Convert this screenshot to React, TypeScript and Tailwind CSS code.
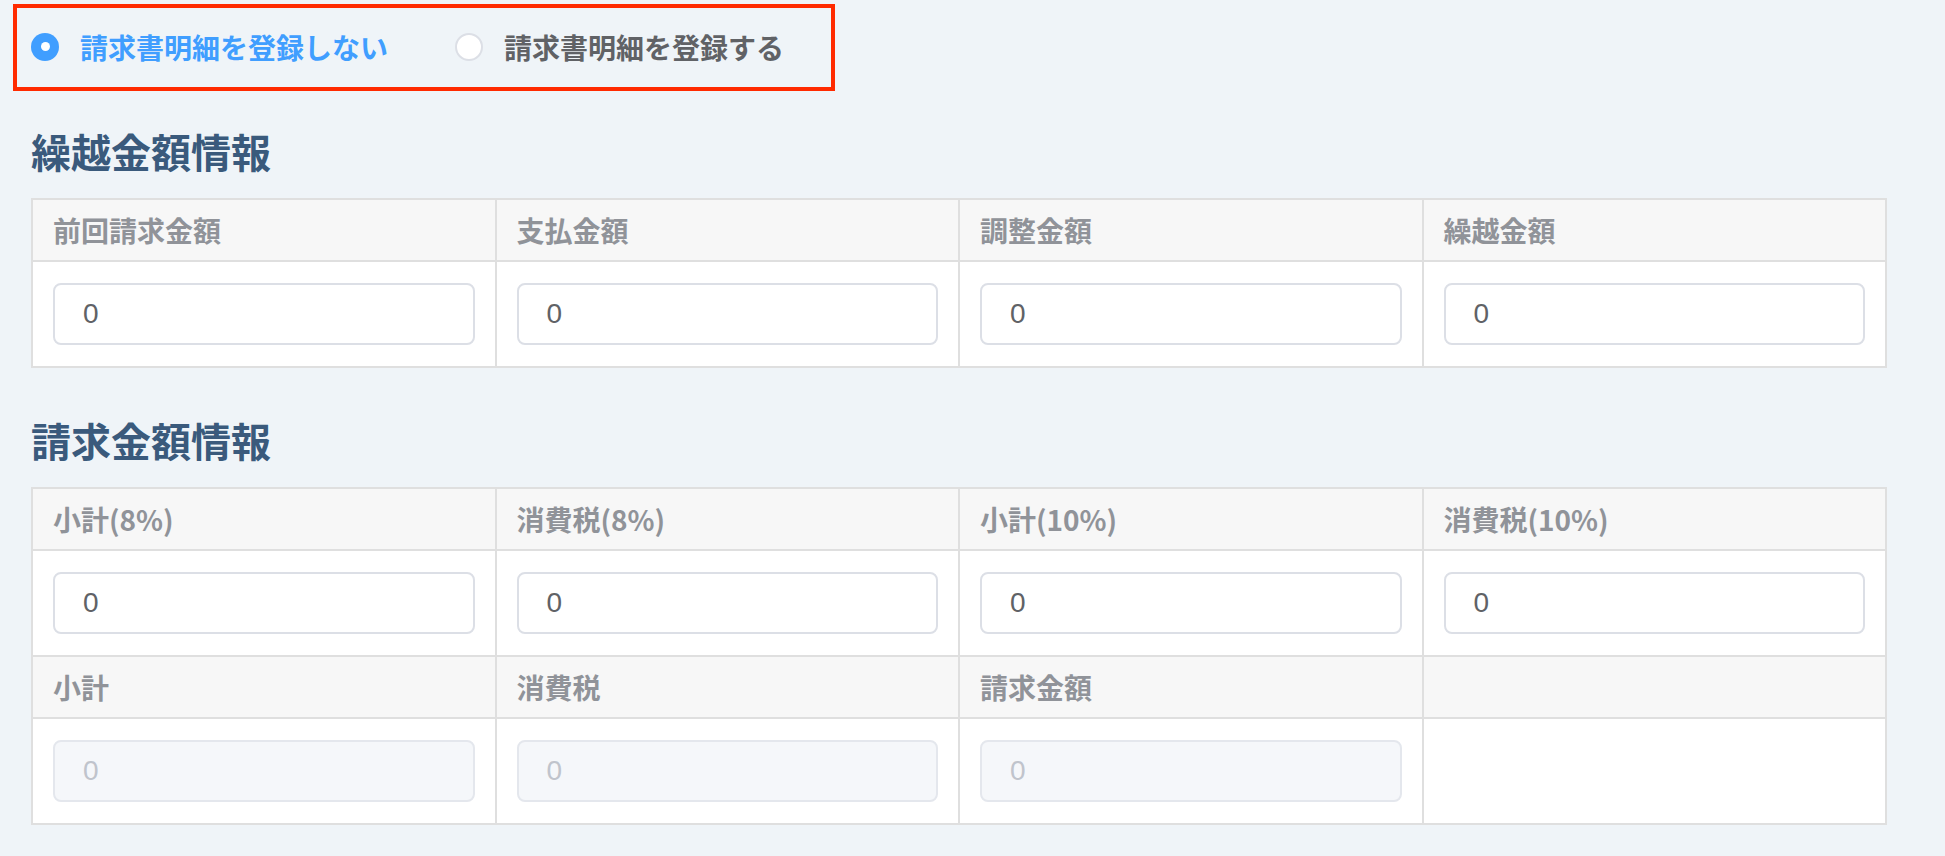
import React from 'react';

const jp = { fontFamily: '"Noto Sans CJK JP", "Noto Sans", sans-serif' };
const num = { fontFamily: '"Liberation Sans", "Noto Sans CJK JP", sans-serif' };

type Cell = { label: string; value?: string; disabled?: boolean } | null;

const Radio: React.FC<{ label: string; checked?: boolean }> = ({ label, checked }) => (
  <label className="flex items-center gap-[21px] cursor-pointer">
    {checked ? (
      <span className="w-[28px] h-[28px] rounded-full bg-[#409eff] flex items-center justify-center">
        <span className="w-[9px] h-[9px] rounded-full bg-white" />
      </span>
    ) : (
      <span className="w-[28px] h-[28px] rounded-full bg-white border-2 border-[#dcdfe6]" />
    )}
    <span className={`text-[28px] leading-none font-semibold ${checked ? 'text-[#409eff]' : 'text-[#606266]'}`}>{label}</span>
  </label>
);

const Input: React.FC<{ value: string; disabled?: boolean }> = ({ value, disabled }) => (
  <div
    style={num}
    className={
      disabled
        ? 'h-[62px] rounded-[8px] border-2 border-[#e4e7ed] bg-[#f5f7fa] text-[#c0c4cc] text-[28px] pl-[28px] flex items-center'
        : 'h-[62px] rounded-[8px] border-2 border-[#dcdfe6] bg-white text-[#606266] text-[28px] pl-[28px] flex items-center'
    }
  >
    {value}
  </div>
);

const AmountTable: React.FC<{ rows: Cell[][] }> = ({ rows }) => (
  <div className="w-[1856px] grid grid-cols-4 border-l-2 border-t-2 border-[#dfdfdf]">
    {rows.map((row, ri) => (
      <React.Fragment key={ri}>
        {row.map((c, ci) => (
          <div
            key={'h' + ci}
            className="h-[62px] bg-[#f7f7f7] border-r-2 border-b-2 border-[#dfdfdf] pl-[20px] flex items-center text-[28px] font-bold text-[#909399]"
          >
            {c?.label}
          </div>
        ))}
        {row.map((c, ci) => (
          <div key={'b' + ci} className="h-[106px] bg-white border-r-2 border-b-2 border-[#dfdfdf] px-[20px] pt-[21px]">
            {c && <Input value={c.value ?? '0'} disabled={c.disabled} />}
          </div>
        ))}
      </React.Fragment>
    ))}
  </div>
);

export default function App() {
  return (
    <div style={jp} className="min-h-[856px] w-full bg-[#eff4f8] pl-[31px] pt-[4px] pb-[34px]">
      <div className="-ml-[18px] w-[822px] h-[87px] border-[4px] border-[#ff2a00] flex items-center gap-[67px] pl-[14px] pb-[2px]">
        <Radio label="請求書明細を登録しない" checked />
        <Radio label="請求書明細を登録する" />
      </div>

      <h2 className="mt-[40px] mb-[27px] text-[40px] leading-[40px] font-bold text-[#3a5a7c]">繰越金額情報</h2>
      <AmountTable
        rows={[
          [
            { label: '前回請求金額' },
            { label: '支払金額' },
            { label: '調整金額' },
            { label: '繰越金額' },
          ],
        ]}
      />

      <h2 className="mt-[52px] mb-[27px] text-[40px] leading-[40px] font-bold text-[#3a5a7c]">請求金額情報</h2>
      <AmountTable
        rows={[
          [
            { label: '小計(8%)' },
            { label: '消費税(8%)' },
            { label: '小計(10%)' },
            { label: '消費税(10%)' },
          ],
          [
            { label: '小計', disabled: true },
            { label: '消費税', disabled: true },
            { label: '請求金額', disabled: true },
            null,
          ],
        ]}
      />
    </div>
  );
}
